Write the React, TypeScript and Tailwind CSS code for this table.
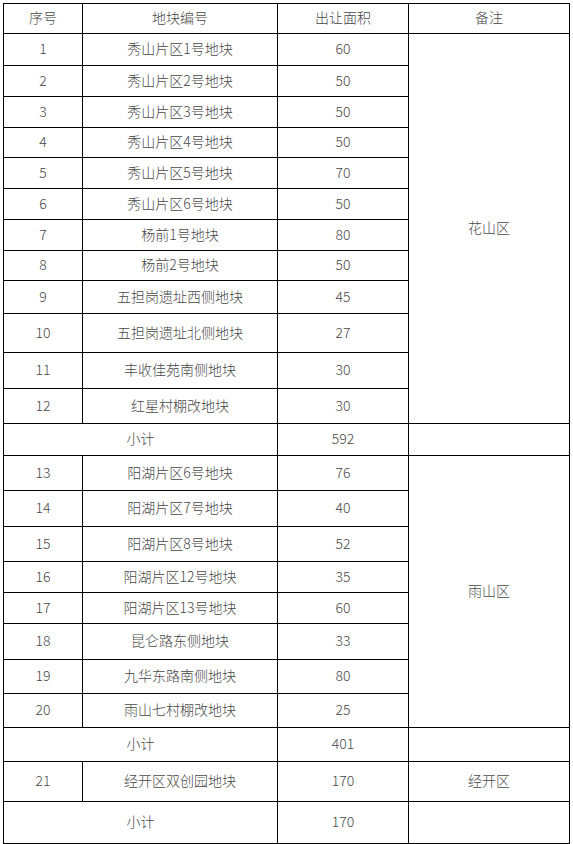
import React from 'react';

type Row = { no?: string; name?: string; area: string; subtotal?: boolean; h: number };

const rows: Row[] = [
  { no: '1', name: '秀山片区1号地块', area: '60', h: 32 },
  { no: '2', name: '秀山片区2号地块', area: '50', h: 31 },
  { no: '3', name: '秀山片区3号地块', area: '50', h: 31 },
  { no: '4', name: '秀山片区4号地块', area: '50', h: 30 },
  { no: '5', name: '秀山片区5号地块', area: '70', h: 31 },
  { no: '6', name: '秀山片区6号地块', area: '50', h: 31 },
  { no: '7', name: '杨前1号地块', area: '80', h: 31 },
  { no: '8', name: '杨前2号地块', area: '50', h: 30 },
  { no: '9', name: '五担岗遗址西侧地块', area: '45', h: 33 },
  { no: '10', name: '五担岗遗址北侧地块', area: '27', h: 39 },
  { no: '11', name: '丰收佳苑南侧地块', area: '30', h: 36 },
  { no: '12', name: '红星村棚改地块', area: '30', h: 35 },
  { subtotal: true, area: '592', h: 32 },
  { no: '13', name: '阳湖片区6号地块', area: '76', h: 35 },
  { no: '14', name: '阳湖片区7号地块', area: '40', h: 36 },
  { no: '15', name: '阳湖片区8号地块', area: '52', h: 35 },
  { no: '16', name: '阳湖片区12号地块', area: '35', h: 31 },
  { no: '17', name: '阳湖片区13号地块', area: '60', h: 31 },
  { no: '18', name: '昆仑路东侧地块', area: '33', h: 36 },
  { no: '19', name: '九华东路南侧地块', area: '80', h: 34 },
  { no: '20', name: '雨山七村棚改地块', area: '25', h: 34 },
  { subtotal: true, area: '401', h: 34 },
  { no: '21', name: '经开区双创园地块', area: '170', h: 40 },
  { subtotal: true, area: '170', h: 42 },
  { no: '', name: '', area: '', h: 36 },
];

// which row index starts a remark cell, and how many rows it spans
const remarks: Record<number, { text: string; span: number }> = {
  0: { text: '花山区', span: 12 },
  12: { text: '', span: 1 },
  13: { text: '雨山区', span: 8 },
  21: { text: '', span: 1 },
  22: { text: '经开区', span: 1 },
  23: { text: '', span: 1 },
  24: { text: '', span: 1 },
};

const cell = 'border border-black text-center align-middle p-0 pb-[3px]';

export default function App() {
  return (
    <div className="bg-white w-[573px] h-[844px] overflow-hidden pt-[3px] pl-[3px]">
      <table
        className="table-fixed border-collapse w-[566px] text-[14px] text-[#484848] font-light leading-none"
        style={{ fontFamily: '"Noto Sans CJK SC", "Noto Sans", sans-serif' }}
      >
        <colgroup>
          <col className="w-[79px]" />
          <col className="w-[195px]" />
          <col className="w-[131px]" />
          <col className="w-[161px]" />
        </colgroup>
        <tbody>
          <tr className="h-[30px]">
            <td className={cell}>序号</td>
            <td className={cell}>地块编号</td>
            <td className={cell}>出让面积</td>
            <td className={cell}>备注</td>
          </tr>
          {rows.map((r, i) => (
            <tr key={i} style={{ height: r.h }}>
              {r.subtotal ? (
                <td className={cell} colSpan={2}>小计</td>
              ) : (
                <>
                  <td className={cell}>{r.no}</td>
                  <td className={cell}>{r.name}</td>
                </>
              )}
              <td className={cell}>{r.area}</td>
              {remarks[i] && (
                <td className={cell} rowSpan={remarks[i].span}>
                  {remarks[i].text}
                </td>
              )}
            </tr>
          ))}
        </tbody>
      </table>
    </div>
  );
}
